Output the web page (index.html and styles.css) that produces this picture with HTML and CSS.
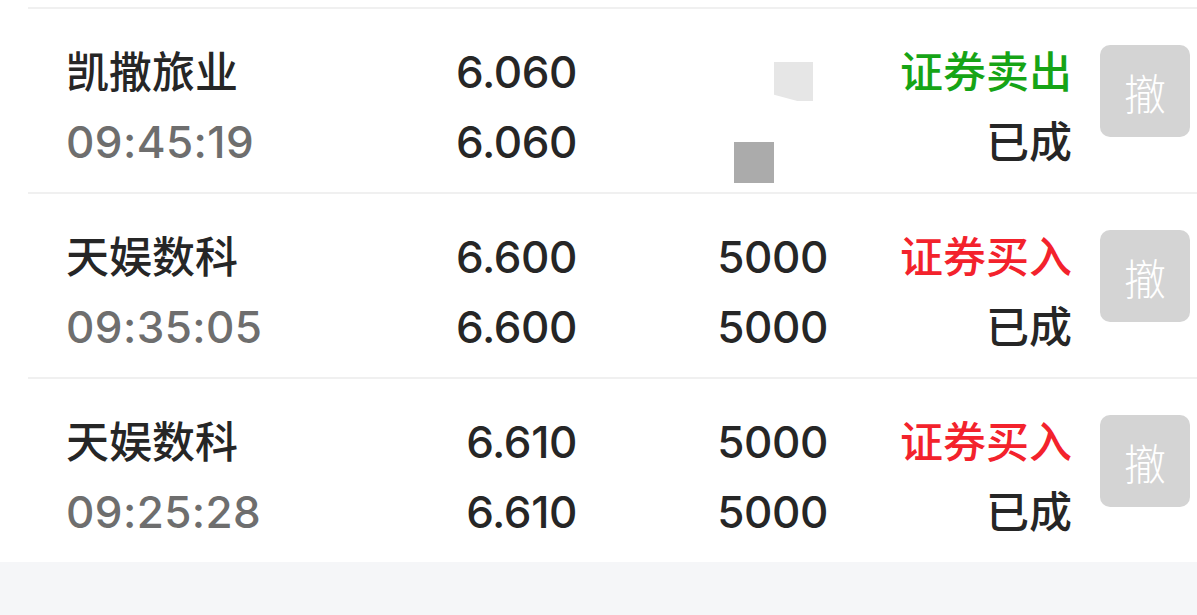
FILE: index.html
```html
<!DOCTYPE html>
<html lang="zh">
<head>
<meta charset="utf-8">
<title>委托列表</title>
<link rel="stylesheet" href="styles.css">
</head>
<body>
<div class="page">
  <div class="list">
    <div class="row">
      <div class="cell name">凯撒旅业</div>
      <div class="cell price">6.060</div>
      <div class="cell qty"><span class="mask mask-light"></span></div>
      <div class="cell type sell">证券卖出</div>
      <div class="btn-wrap"><div class="btn">撤</div></div>
      <div class="cell time">09:45:19</div>
      <div class="cell price">6.060</div>
      <div class="cell qty"><span class="mask mask-dark"></span></div>
      <div class="cell status">已成</div>
    </div>
    <div class="row">
      <div class="cell name">天娱数科</div>
      <div class="cell price">6.600</div>
      <div class="cell qty">5000</div>
      <div class="cell type buy">证券买入</div>
      <div class="btn-wrap"><div class="btn">撤</div></div>
      <div class="cell time">09:35:05</div>
      <div class="cell price">6.600</div>
      <div class="cell qty">5000</div>
      <div class="cell status">已成</div>
    </div>
    <div class="row">
      <div class="cell name">天娱数科</div>
      <div class="cell price">6.610</div>
      <div class="cell qty">5000</div>
      <div class="cell type buy">证券买入</div>
      <div class="btn-wrap"><div class="btn">撤</div></div>
      <div class="cell time">09:25:28</div>
      <div class="cell price">6.610</div>
      <div class="cell qty">5000</div>
      <div class="cell status">已成</div>
    </div>
  </div>
  <div class="footer"></div>
</div>
</body>
</html>
```
FILE: styles.css
```css
* { box-sizing: border-box; }
html, body { margin: 0; padding: 0; }
body {
  background: #ffffff;
  font-family: Inter, "Liberation Sans", "Noto Sans CJK SC", sans-serif;
  color: #262626;
}
.page {
  width: 1197px;
  height: 615px;
  display: flex;
  flex-direction: column;
  padding-top: 7px;
  background: #ffffff;
}
.list {
  padding-left: 28px;
  background: #ffffff;
}
.row {
  border-top: 2px solid #f0f0f0;
  padding: 28px 0 15px 38px;
  display: grid;
  grid-template-columns: 294px 217px 251px 244px 118px;
  grid-template-rows: 70px 70px;
}
.cell {
  display: flex;
  align-items: center;
  font-size: 44px;
  font-weight: 500;
  line-height: 1;
  white-space: nowrap;
}
.name, .type, .status {
  font-family: "Noto Sans CJK SC", sans-serif;
  font-size: 43px;
  font-weight: 500;
  padding-bottom: 6px;
}
.name { color: #262626; }
.time { color: #6e6e6e; letter-spacing: 0.4px; }
.price, .qty, .type, .status { justify-content: flex-end; }
.price, .qty { letter-spacing: -0.4px; }
.sell { color: #16a416; }
.buy { color: #f3222c; }
.status { color: #262626; }
.btn-wrap {
  grid-column: 5;
  grid-row: 1 / span 2;
  padding-left: 28px;
  padding-top: 8px;
}
.btn {
  width: 90px;
  height: 92px;
  border-radius: 10px;
  background: #d4d4d4;
  color: #ffffff;
  font-family: "Noto Sans CJK SC", sans-serif;
  font-size: 42px;
  font-weight: 300;
  display: flex;
  align-items: center;
  justify-content: center;
}
.mask { display: block; }
.mask-light {
  width: 39px;
  height: 39px;
  background: #e6e6e6;
  margin-top: 19px;
  margin-right: 15px;
  clip-path: polygon(0 0, 100% 0, 100% 100%, 60% 100%, 0 84%);
}
.mask-dark {
  width: 40px;
  height: 41px;
  background: #ababab;
  margin-top: 41px;
  margin-right: 54px;
}
.footer {
  flex: 1;
  background: #f5f6f8;
}
```
